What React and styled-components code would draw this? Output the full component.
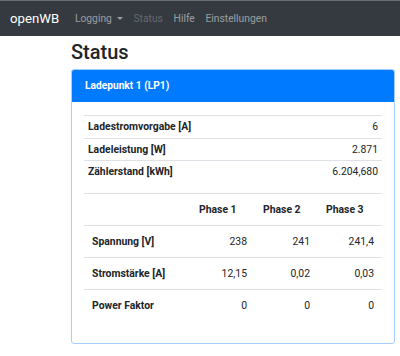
import styled, { createGlobalStyle } from "styled-components";

const GlobalStyle = createGlobalStyle`
  body {
    margin: 0;
    background: #fff;
    font-family: Roboto, "Liberation Sans", sans-serif;
    color: #212529;
  }
`;

const navItems = [
  { label: "Logging", dropdown: true },
  { label: "Status", disabled: true },
  { label: "Hilfe" },
  { label: "Einstellungen" },
];

const summary = [
  ["Ladestromvorgabe [A]", "6"],
  ["Ladeleistung [W]", "2.871"],
  ["Zählerstand [kWh]", "6.204,680"],
];

const phases = [
  ["Spannung [V]", "238", "241", "241,4"],
  ["Stromstärke [A]", "12,15", "0,02", "0,03"],
  ["Power Faktor", "0", "0", "0"],
];

const App = () => {
  return (
    <>
      <GlobalStyle />
      <Navbar>
        <Brand>openWB</Brand>
        <NavList>
          {navItems.map((item) => (
            <NavLink key={item.label} $disabled={item.disabled}>
              {item.label}
              {item.dropdown && <Caret />}
            </NavLink>
          ))}
        </NavList>
      </Navbar>
      <Container>
        <Title>Status</Title>
        <Card>
          <CardHeader>Ladepunkt 1 (LP1)</CardHeader>
          <CardBody>
            <SmallTable>
              <tbody>
                {summary.map(([label, value]) => (
                  <tr key={label}>
                    <LabelCell>{label}</LabelCell>
                    <ValueCell>{value}</ValueCell>
                  </tr>
                ))}
              </tbody>
            </SmallTable>
            <PhaseTable>
              <colgroup>
                <col style={{ width: 107 }} />
                <col style={{ width: 64 }} />
                <col style={{ width: 63 }} />
                <col style={{ width: 64 }} />
              </colgroup>
              <thead>
                <tr>
                  <HeadCell />
                  <HeadCell>Phase 1</HeadCell>
                  <HeadCell>Phase 2</HeadCell>
                  <HeadCell>Phase 3</HeadCell>
                </tr>
              </thead>
              <tbody>
                {phases.map(([label, ...values]) => (
                  <tr key={label}>
                    <LabelCell>{label}</LabelCell>
                    {values.map((v, i) => (
                      <ValueCell key={i}>{v}</ValueCell>
                    ))}
                  </tr>
                ))}
              </tbody>
            </PhaseTable>
          </CardBody>
        </Card>
      </Container>
    </>
  );
};

const Navbar = styled.nav`
  display: flex;
  align-items: center;
  height: 36px;
  box-sizing: border-box;
  padding: 0 10px;
  background: #343a40;
  border-top: 1px solid #6b6e72;
`;

const Brand = styled.div`
  font-size: 13.2px;
  color: #fff;
  margin-right: 10.5px;
`;

const NavList = styled.div`
  display: flex;
  align-items: center;
`;

const NavLink = styled.div`
  display: flex;
  align-items: center;
  padding: 0 5.3px;
  font-size: 10.3px;
  color: ${(p) => (p.$disabled ? "rgba(255,255,255,0.25)" : "rgba(255,255,255,0.5)")};
`;

const Caret = styled.span`
  margin-left: 5px;
  width: 0;
  height: 0;
  border-top: 3.5px solid currentColor;
  border-left: 3px solid transparent;
  border-right: 3px solid transparent;
`;

const Container = styled.main`
  padding: 0 5px 0 71px;
`;

const Title = styled.h1`
  margin: 4px 0 5px;
  font-size: 20px;
  font-weight: 500;
  line-height: 24px;
`;

const Card = styled.section`
  border: 1px solid #a3ceff;
  border-radius: 3px;
  overflow: hidden;
`;

const CardHeader = styled.div`
  background: #007bff;
  color: #fff;
  font-size: 10.2px;
  font-weight: 700;
  line-height: 16px;
  padding: 8px 13px;
`;

const CardBody = styled.div`
  padding: 13px 12px 11px;
`;

const BaseTable = styled.table`
  width: 100%;
  border-collapse: collapse;
  margin-bottom: 10px;
  font-size: 10.4px;
  line-height: 15.6px;

  td {
    border-top: 1px solid #dee2e6;
  }
`;

const SmallTable = styled(BaseTable)`
  td {
    padding: 3px 4px;
  }
`;

const PhaseTable = styled(BaseTable)`
  table-layout: fixed;

  td,
  th {
    padding: 7.8px 8px;
  }
`;

const HeadCell = styled.th`
  text-align: left;
  font-weight: 700;
  border-top: 1px solid #dee2e6;
  border-bottom: 1px solid #dee2e6;
`;

const LabelCell = styled.td`
  font-weight: 700;
  text-align: left;
`;

const ValueCell = styled.td`
  text-align: right;
`;

export default App;
